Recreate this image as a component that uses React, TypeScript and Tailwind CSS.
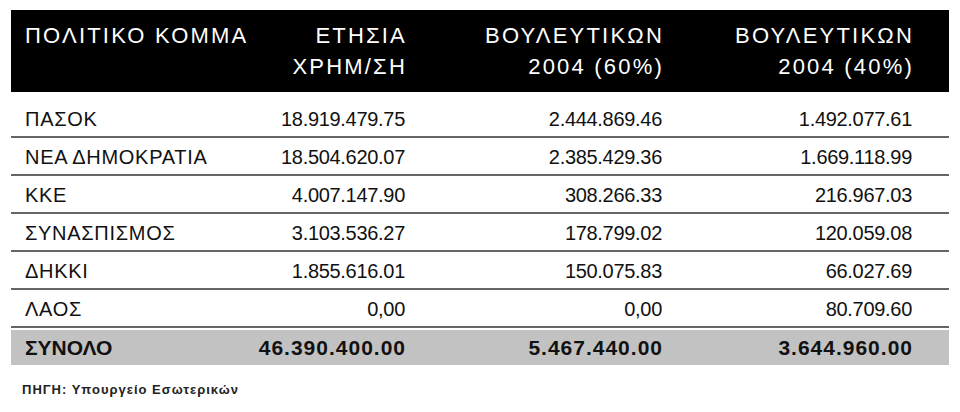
import React from 'react';

const rows = [
  ['ΠΑΣΟΚ', '18.919.479.75', '2.444.869.46', '1.492.077.61'],
  ['ΝΕΑ ΔΗΜΟΚΡΑΤΙΑ', '18.504.620.07', '2.385.429.36', '1.669.118.99'],
  ['ΚΚΕ', '4.007.147.90', '308.266.33', '216.967.03'],
  ['ΣΥΝΑΣΠΙΣΜΟΣ', '3.103.536.27', '178.799.02', '120.059.08'],
  ['ΔΗΚΚΙ', '1.855.616.01', '150.075.83', '66.027.69'],
  ['ΛΑΟΣ', '0,00', '0,00', '80.709.60'],
];

const cols = 'grid grid-cols-[205px_175px_257px_250px] pl-[14px] pr-[37px]';

const FundingTable = () => {
  return (
    <div className="w-[960px] h-[412px] bg-white pt-[10px] px-[11px] font-['Liberation_Sans',Arial,sans-serif] text-[#111]">
      <div className="w-[938px]">
        {/* header */}
        <div className={`${cols} bg-black text-white py-[10px] text-[22px] leading-[31px] tracking-[2.2px] whitespace-nowrap`}>
          <div>ΠΟΛΙΤΙΚΟ ΚΟΜΜΑ</div>
          <div className="text-right -mr-[2px]">ΕΤΗΣΙΑ<br />ΧΡΗΜ/ΣΗ</div>
          <div className="text-right -mr-[2px]">ΒΟΥΛΕΥΤΙΚΩΝ<br />2004 (60%)</div>
          <div className="text-right -mr-[2px]">ΒΟΥΛΕΥΤΙΚΩΝ<br />2004 (40%)</div>
        </div>

        <div className="mt-[8px]">
          {rows.map((r) => (
            <div key={r[0]} className={`${cols} h-[38px] items-end pb-[5px] border-b-2 border-[#666] text-[20px] leading-[24px] tracking-[-0.3px]`}>
              <div className="tracking-[0.7px] whitespace-nowrap">{r[0]}</div>
              <div className="text-right">{r[1]}</div>
              <div className="text-right">{r[2]}</div>
              <div className="text-right">{r[3]}</div>
            </div>
          ))}
          <div className={`${cols} mt-[2px] h-[35px] items-center bg-[#c2c2c2] text-[21px] font-bold`}>
            <div>ΣΥΝΟΛΟ</div>
            <div className="text-right tracking-[1px] -mr-[1px]">46.390.400.00</div>
            <div className="text-right tracking-[1px] -mr-[1px]">5.467.440.00</div>
            <div className="text-right tracking-[1px] -mr-[1px]">3.644.960.00</div>
          </div>
        </div>

        <p className="mt-[15px] pl-[11px] text-[13px] font-bold tracking-[1px] text-[#222]">
          ΠΗΓΗ: Υπουργείο Εσωτερικών
        </p>
      </div>
    </div>
  );
};

export default FundingTable;
